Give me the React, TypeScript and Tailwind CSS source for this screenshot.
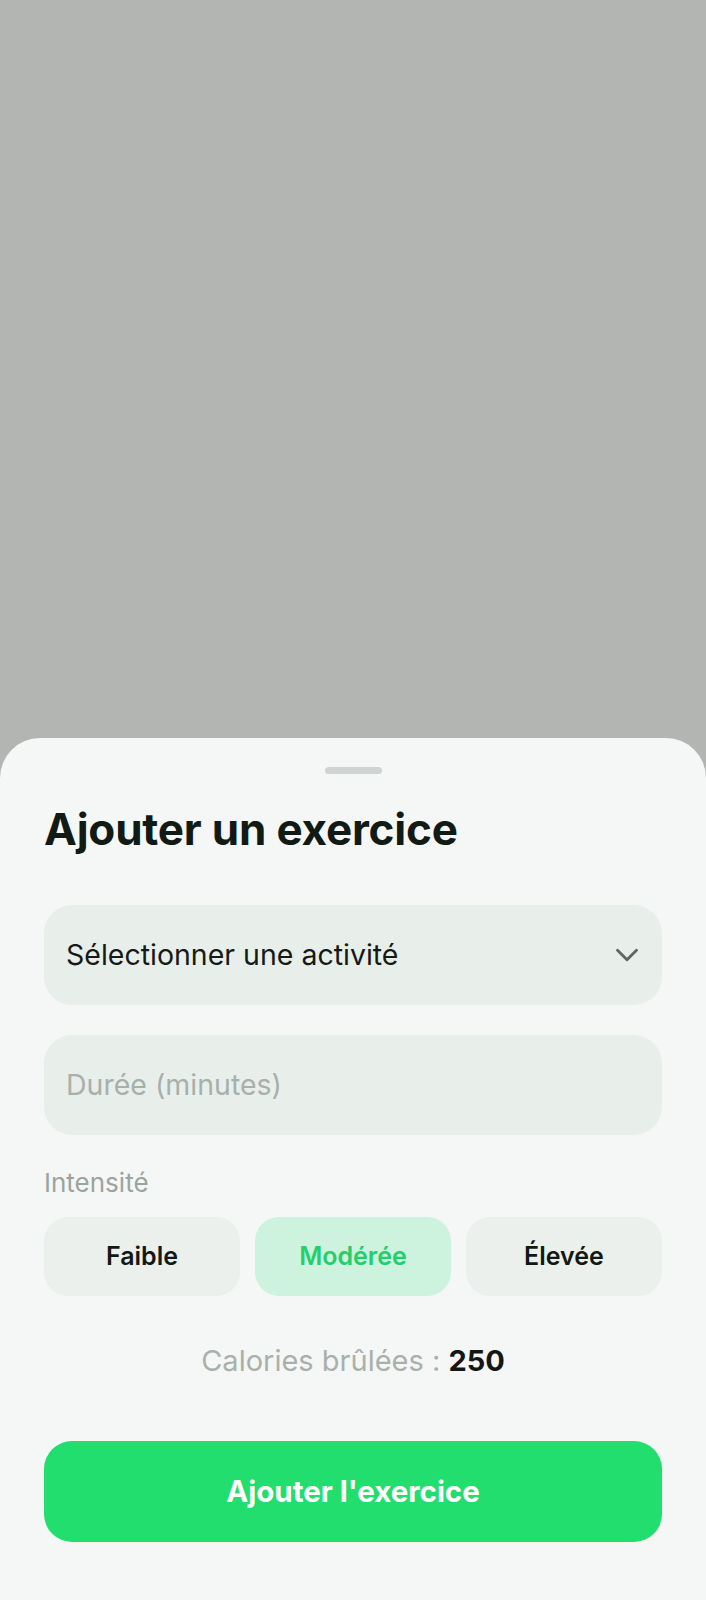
import { ChevronDown } from "lucide-react";

const levels = ["Faible", "Modérée", "Élevée"];

export default function App() {
  const active = "Modérée";

  return (
    <div
      className="h-[1600px] flex flex-col bg-[#b2b5b2]"
      style={{ fontFamily: "Inter, 'Noto Sans', sans-serif" }}
    >
      <div className="flex-1" />

      {/* Bottom sheet */}
      <div className="bg-[#f5f7f6] rounded-t-[40px] px-[44px] pt-[29px] pb-[58px] flex flex-col">
        <div className="self-center w-[57px] h-[7px] rounded-full bg-[#cfd4d2]" />

        <h1 className="mt-[29px] text-[44px] leading-[52px] font-bold text-[#111a15] tracking-[-0.2px]">
          Ajouter un exercice
        </h1>

        {/* Activity select */}
        <button className="mt-[50px] h-[100px] rounded-[28px] bg-[#e8efeb] pl-[22px] pr-[16px] flex items-center justify-between">
          <span className="text-[28.5px] text-[#151a17]">Sélectionner une activité</span>
          <ChevronDown className="w-[38px] h-[38px] text-[#5f6664]" strokeWidth={1.8} />
        </button>

        {/* Duration */}
        <div className="mt-[30px] h-[100px] rounded-[28px] bg-[#e8efeb] pl-[22px] flex items-center">
          <span className="text-[28.5px] text-[#a7b0ab]">Durée (minutes)</span>
        </div>

        <p className="mt-[33px] text-[26px] leading-[30px] text-[#9ba39f]">Intensité</p>

        {/* Intensity */}
        <div className="mt-[19px] grid grid-cols-3 gap-[15px]">
          {levels.map((l) => (
            <button
              key={l}
              className={
                l === active
                  ? "h-[79px] rounded-[24px] bg-[#cdf2dd] text-[#22cf6a] text-[25px] font-semibold"
                  : "h-[79px] rounded-[24px] bg-[#ebf0ed] text-[#141815] text-[25px] font-semibold"
              }
            >
              {l}
            </button>
          ))}
        </div>

        {/* Calories */}
        <p className="mt-[48px] text-center text-[29px] leading-[34px] text-[#a9b0ac]">
          Calories brûlées : <span className="font-bold text-[#141815]">250</span>
        </p>

        <button className="mt-[63px] h-[101px] rounded-[28px] bg-[#21de6e] text-white text-[29.5px] font-bold">
          Ajouter l'exercice
        </button>
      </div>
    </div>
  );
}
